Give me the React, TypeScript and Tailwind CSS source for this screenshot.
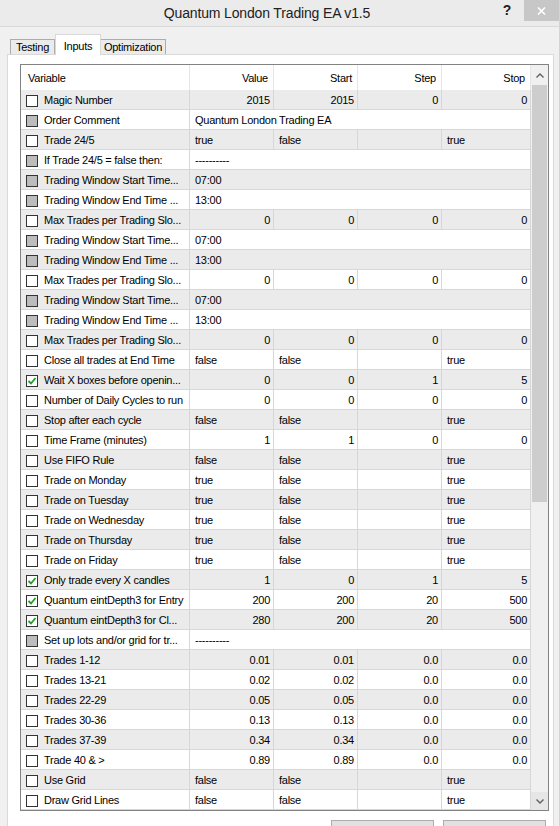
import React from "react";

type Row = { n: string; c: 0 | 1 | 2; t: "num" | "span" | "bool"; v: string[] };

const rows: Row[] = [
  { n: "Magic Number", c: 0, t: "num", v: ["2015", "2015", "0", "0"] },
  { n: "Order Comment", c: 1, t: "span", v: ["Quantum London Trading EA"] },
  { n: "Trade 24/5", c: 0, t: "bool", v: ["true", "false", "", "true"] },
  { n: "If Trade 24/5 = false then:", c: 1, t: "span", v: ["----------"] },
  { n: "Trading Window Start Time...", c: 1, t: "span", v: ["07:00"] },
  { n: "Trading Window End Time ...", c: 1, t: "span", v: ["13:00"] },
  { n: "Max Trades per Trading Slo...", c: 0, t: "num", v: ["0", "0", "0", "0"] },
  { n: "Trading Window Start Time...", c: 1, t: "span", v: ["07:00"] },
  { n: "Trading Window End Time ...", c: 1, t: "span", v: ["13:00"] },
  { n: "Max Trades per Trading Slo...", c: 0, t: "num", v: ["0", "0", "0", "0"] },
  { n: "Trading Window Start Time...", c: 1, t: "span", v: ["07:00"] },
  { n: "Trading Window End Time ...", c: 1, t: "span", v: ["13:00"] },
  { n: "Max Trades per Trading Slo...", c: 0, t: "num", v: ["0", "0", "0", "0"] },
  { n: "Close all trades at End Time", c: 0, t: "bool", v: ["false", "false", "", "true"] },
  { n: "Wait X boxes before openin...", c: 2, t: "num", v: ["0", "0", "1", "5"] },
  { n: "Number of Daily Cycles to run", c: 0, t: "num", v: ["0", "0", "0", "0"] },
  { n: "Stop after each cycle", c: 0, t: "bool", v: ["false", "false", "", "true"] },
  { n: "Time Frame (minutes)", c: 0, t: "num", v: ["1", "1", "0", "0"] },
  { n: "Use FIFO Rule", c: 0, t: "bool", v: ["false", "false", "", "true"] },
  { n: "Trade on Monday", c: 0, t: "bool", v: ["true", "false", "", "true"] },
  { n: "Trade on Tuesday", c: 0, t: "bool", v: ["true", "false", "", "true"] },
  { n: "Trade on Wednesday", c: 0, t: "bool", v: ["true", "false", "", "true"] },
  { n: "Trade on Thursday", c: 0, t: "bool", v: ["true", "false", "", "true"] },
  { n: "Trade on Friday", c: 0, t: "bool", v: ["true", "false", "", "true"] },
  { n: "Only trade every X candles", c: 2, t: "num", v: ["1", "0", "1", "5"] },
  { n: "Quantum eintDepth3 for Entry", c: 2, t: "num", v: ["200", "200", "20", "500"] },
  { n: "Quantum eintDepth3 for Cl...", c: 2, t: "num", v: ["280", "200", "20", "500"] },
  { n: "Set up lots and/or grid for tr...", c: 1, t: "span", v: ["----------"] },
  { n: "Trades 1-12", c: 0, t: "num", v: ["0.01", "0.01", "0.0", "0.0"] },
  { n: "Trades 13-21", c: 0, t: "num", v: ["0.02", "0.02", "0.0", "0.0"] },
  { n: "Trades 22-29", c: 0, t: "num", v: ["0.05", "0.05", "0.0", "0.0"] },
  { n: "Trades 30-36", c: 0, t: "num", v: ["0.13", "0.13", "0.0", "0.0"] },
  { n: "Trades 37-39", c: 0, t: "num", v: ["0.34", "0.34", "0.0", "0.0"] },
  { n: "Trade 40 & >", c: 0, t: "num", v: ["0.89", "0.89", "0.0", "0.0"] },
  { n: "Use Grid", c: 0, t: "bool", v: ["false", "false", "", "true"] },
  { n: "Draw Grid Lines", c: 0, t: "bool", v: ["false", "false", "", "true"] },
];

const widths = ["w-[84px]", "w-[84px]", "w-[84px]", "w-[89px]"];

function Cb({ s }: { s: 0 | 1 | 2 }) {
  return (
    <span
      className={`w-[12px] h-[12px] shrink-0 border border-[#333333] flex items-center justify-center ${
        s === 1 ? "bg-[#bcbcbc]" : "bg-white"
      }`}
    >
      {s === 2 && (
        <svg width="10" height="10" viewBox="0 0 10 10">
          <path d="M1.5 5 L4 7.5 L8.5 2" fill="none" stroke="#1e9e2a" strokeWidth="1.8" />
        </svg>
      )}
    </span>
  );
}

function Chevron({ up }: { up?: boolean }) {
  return (
    <svg width="8" height="5" viewBox="0 0 8 5">
      <path
        d={up ? "M0.5 4.5 L4 1 L7.5 4.5" : "M0.5 0.5 L4 4 L7.5 0.5"}
        fill="none"
        stroke="#606060"
        strokeWidth="1.4"
      />
    </svg>
  );
}

function DataRow({ r, i }: { r: Row; i: number }) {
  const bg = i % 2 === 0 ? "bg-[#ebebeb]" : "bg-white";
  return (
    <div className={`flex h-[20px] border-b border-[#d7d7d7] ${bg}`}>
      <div className="w-[169px] shrink-0 border-r border-[#d7d7d7] flex items-center pt-[2px] pl-[5px] gap-[6px] overflow-hidden">
        <Cb s={r.c} />
        <span className="whitespace-nowrap">{r.n}</span>
      </div>
      {r.t === "span" ? (
        <div className="w-[341px] shrink-0 border-r border-[#d7d7d7] flex items-center pt-[2px] pl-[5px] whitespace-nowrap">
          {r.v[0]}
        </div>
      ) : (
        r.v.map((v, j) => (
          <div
            key={j}
            className={`${widths[j]} shrink-0 border-r border-[#d7d7d7] flex items-center pt-[2px] whitespace-nowrap ${
              r.t === "num" ? "justify-end pr-[3px]" : "pl-[5px]"
            }`}
          >
            {v}
          </div>
        ))
      )}
    </div>
  );
}

export default function App() {
  return (
    <div className="w-[559px] h-[826px] bg-[#f0f0f0] overflow-hidden font-['Liberation_Sans',Arial,sans-serif] text-[11px] tracking-[-0.25px] text-black">
      {/* Title bar */}
      <div className="h-[27px] bg-[#ebebeb] border-b border-[#dadada] flex items-start">
        <div className="flex-1 h-[26px] flex items-center justify-center pl-[36px] text-[14px] tracking-[-0.15px] text-[#222222]">
          Quantum London Trading EA v1.5
        </div>
        <div className="w-[18px] h-[21px] flex items-center justify-center text-[14px] font-bold text-[#222222] mr-[8px] tracking-normal">
          ?
        </div>
        <div className="w-[35px] h-[21px] bg-[#c7c7c7] flex items-center justify-center">
          <svg width="9" height="8" viewBox="0 0 9 8">
            <path d="M1 0.5 L8 7.5 M8 0.5 L1 7.5" stroke="#ffffff" strokeWidth="1.6" />
          </svg>
        </div>
      </div>

      {/* Tabs + panel */}
      <div className="pl-[7px] pr-[5px] pt-[7px]">
        <div className="flex items-end h-[20px] pl-[3px]">
          <div className="w-[45px] h-[15px] border border-b-0 border-[#acacac] bg-[#ebebeb] flex items-center justify-center pt-[1px]">
            Testing
          </div>
          <div className="relative z-10 w-[46px] h-[21px] -mb-px border border-b-0 border-[#d9d9d9] bg-white flex items-start justify-center pt-[3px]">
            Inputs
          </div>
          <div className="w-[65px] h-[15px] border border-b-0 border-l-0 border-[#acacac] bg-[#ebebeb] flex items-center justify-center pt-[1px]">
            Optimization
          </div>
        </div>
        <div className="border border-[#d9d9d9] bg-white h-[800px] pt-[9px] pl-[12px] pr-[5px]">
          {/* list box */}
          <div className="w-[529px] border border-[#828282] flex bg-white">
            <div className="flex flex-col">
              <div className="flex h-[25px] bg-white">
                <div className="w-[169px] shrink-0 border-r border-[#e5e5e5] flex items-center pt-[2px] pl-[7px]">
                  Variable
                </div>
                {["Value", "Start", "Step", "Stop"].map((h, j) => (
                  <div
                    key={h}
                    className={`${widths[j]} shrink-0 border-r border-[#e5e5e5] flex items-center pt-[2px] justify-end pr-[5px]`}
                  >
                    {h}
                  </div>
                ))}
              </div>
              {rows.map((r, i) => (
                <DataRow key={i} r={r} i={i} />
              ))}
            </div>
            <div className="w-[17px] shrink-0 bg-[#f0f0f0] flex flex-col">
              <div className="h-[20px] flex items-center justify-center">
                <Chevron up />
              </div>
              <div className="h-[417px] mx-px bg-[#cdcdcd]" />
              <div className="flex-1" />
              <div className="h-[18px] flex items-center justify-center bg-[#e6e6e6]">
                <Chevron />
              </div>
            </div>
          </div>
          <div className="flex justify-end gap-[9px] pr-[2px] mt-[9px]">
            <div className="w-[103px] h-[23px] border border-[#adadad] bg-[#e1e1e1] flex items-center justify-center pt-[13px]">
              Load
            </div>
            <div className="w-[103px] h-[23px] border border-[#adadad] bg-[#e1e1e1] flex items-center justify-center pt-[13px]">
              Save
            </div>
          </div>
        </div>
      </div>
    </div>
  );
}
